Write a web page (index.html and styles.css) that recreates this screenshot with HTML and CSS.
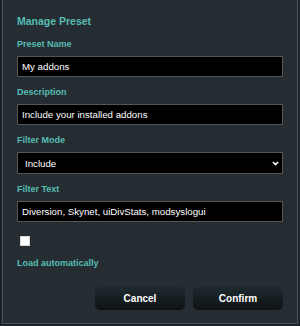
FILE: index.html
```html
<!DOCTYPE html>
<html lang="en">
<head>
  <meta charset="UTF-8">
  <meta name="viewport" content="width=device-width, initial-scale=1.0">
  <title>Manage Preset</title>
  <link rel="stylesheet" href="styles.css">
</head>
<body>
  <div class="panel">
    <h2 class="panel-title">Manage Preset</h2>
    <form id="presetForm">
      <div class="form-group">
        <label for="presetName">Preset Name</label>
        <input type="text" id="presetName" name="presetName" value="My addons">
      </div>

      <div class="form-group">
        <label for="presetDesc">Description</label>
        <input type="text" id="presetDesc" name="presetDesc" value="Include your installed addons">
      </div>

      <div class="form-group">
        <label for="filterMode">Filter Mode</label>
        <div class="select-wrap">
          <select id="filterMode" name="filterMode">
            <option value="include" selected>Include</option>
            <option value="exclude">Exclude</option>
          </select>
          <svg class="chevron" width="7" height="5" viewBox="0 0 7 5">
            <path d="M1 1 L3.5 3.5 L6 1" fill="none" stroke="#fff" stroke-width="1.7"/>
          </svg>
        </div>
      </div>

      <div class="form-group">
        <label for="filterText">Filter Text</label>
        <input type="text" id="filterText" name="filterText" value="Diversion, Skynet, uiDivStats, modsyslogui">
      </div>

      <div class="check-row">
        <input type="checkbox" id="autoLoad" name="autoLoad">
      </div>
      <label class="check-label" for="autoLoad">Load automatically</label>

      <div class="actions">
        <button type="button" class="btn">Cancel</button>
        <button type="submit" class="btn">Confirm</button>
      </div>
    </form>
  </div>
</body>
</html>
```

FILE: styles.css
```css
body {
  margin: 0;
  background-color: #1c2226;
  font-family: "Liberation Sans", Arial, sans-serif;
}
.panel {
  box-sizing: border-box;
  width: 296px;
  margin-left: 2px;
  background: #262d32;
  border: 1px solid #45545e;
  border-top: none;
  padding: 14px 14px 13px;
}
.panel-title {
  margin: 0 0 9px;
  font-size: 10.5px;
  line-height: 15px;
  font-weight: bold;
  color: #55bdb3;
}
.form-group {
  margin-bottom: 9px;
}
label {
  display: block;
  margin-bottom: 6px;
  font-size: 9px;
  line-height: 12px;
  font-weight: bold;
  color: #55bdb3;
}
input[type="text"], select {
  display: block;
  box-sizing: border-box;
  width: 100%;
  height: 21px;
  margin: 0;
  padding: 0 4px;
  background: #000;
  color: #fff;
  border: 1px solid #555;
  border-radius: 0;
  font-family: inherit;
  font-size: 9.7px;
  outline: none;
}
.select-wrap {
  position: relative;
}
select {
  height: 22px;
  padding-left: 7px;
  -webkit-appearance: none;
  appearance: none;
}
.chevron {
  position: absolute;
  right: 4px;
  top: 9px;
}
.check-row {
  padding: 5px 0 0 3px;
  height: 10px;
}
.check-row input {
  -webkit-appearance: none;
  appearance: none;
  display: block;
  width: 10px;
  height: 10px;
  margin: 0;
  background: #fff;
  border: 1px solid #d8d8d8;
  border-radius: 0;
}
.check-label {
  margin: 11px 0 0;
}
.actions {
  display: flex;
  justify-content: flex-end;
  gap: 8px;
  margin-top: 17px;
}
.btn {
  width: 90px;
  height: 24px;
  border: none;
  border-radius: 5px;
  background: linear-gradient(#1f2b31, #0e1214);
  color: #fff;
  font-family: inherit;
  font-size: 10px;
  font-weight: bold;
  cursor: pointer;
}
```
